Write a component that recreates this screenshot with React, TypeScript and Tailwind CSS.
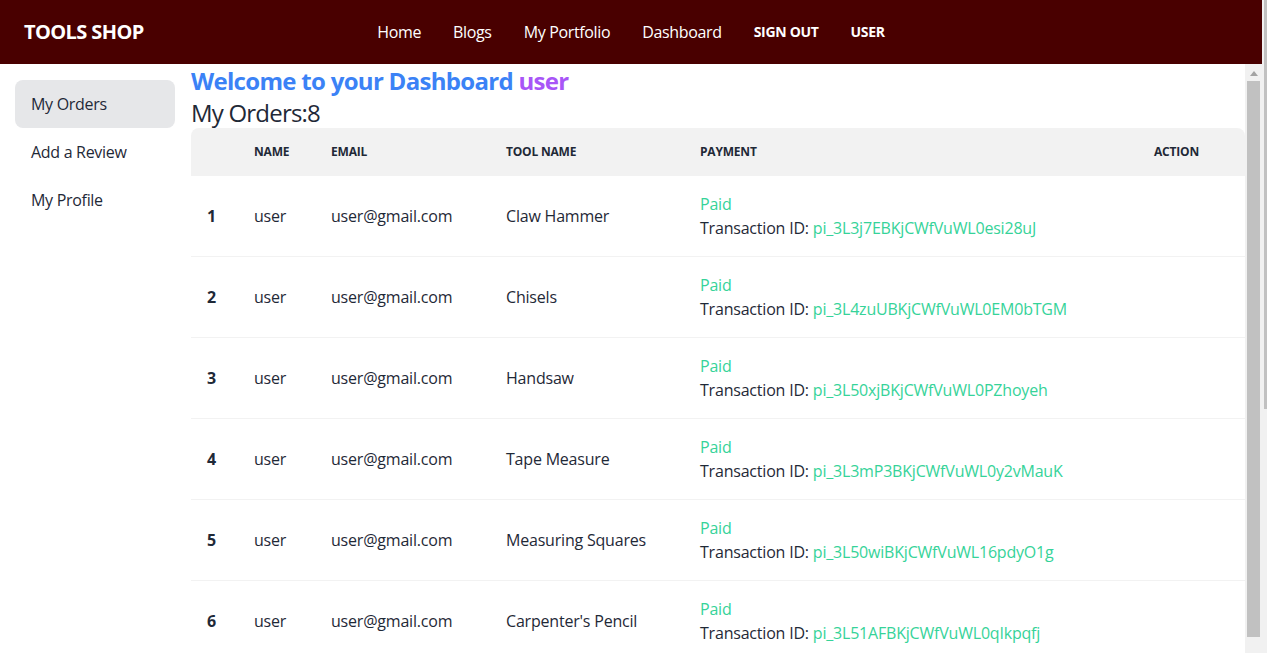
const ORDERS = [
  { name: 'user', email: 'user@gmail.com', tool: 'Claw Hammer', tx: 'pi_3L3j7EBKjCWfVuWL0esi28uJ' },
  { name: 'user', email: 'user@gmail.com', tool: 'Chisels', tx: 'pi_3L4zuUBKjCWfVuWL0EM0bTGM' },
  { name: 'user', email: 'user@gmail.com', tool: 'Handsaw', tx: 'pi_3L50xjBKjCWfVuWL0PZhoyeh' },
  { name: 'user', email: 'user@gmail.com', tool: 'Tape Measure', tx: 'pi_3L3mP3BKjCWfVuWL0y2vMauK' },
  { name: 'user', email: 'user@gmail.com', tool: 'Measuring Squares', tx: 'pi_3L50wiBKjCWfVuWL16pdyO1g' },
  { name: 'user', email: 'user@gmail.com', tool: "Carpenter's Pencil", tx: 'pi_3L51AFBKjCWfVuWL0qIkpqfj' },
];

const NAV_LINKS = ['Home', 'Blogs', 'My Portfolio', 'Dashboard'];

function Navbar() {
  return (
    <nav className="h-16 shrink-0 flex items-center bg-[#490000] text-white">
      <div className="flex-1">
        <span className="ml-6 text-xl font-bold tracking-[-0.6px]">TOOLS SHOP</span>
      </div>
      <ul className="flex items-center gap-8">
        {NAV_LINKS.map((link) => (
          <li key={link} className="text-base tracking-[-0.35px]">{link}</li>
        ))}
        <li className="text-sm font-bold tracking-[-0.3px]">SIGN OUT</li>
        <li className="text-sm font-bold tracking-[-0.3px]">USER</li>
      </ul>
      <div className="flex-1" />
    </nav>
  );
}

function Sidebar() {
  return (
    <aside className="w-[191px] shrink-0 pt-4 pl-[15px] pr-4">
      <ul className="flex flex-col text-[#1f2937] tracking-[-0.3px]">
        <li className="h-12 flex items-center px-4 rounded-lg bg-[#e6e7e9]">My Orders</li>
        <li className="h-12 flex items-center px-4">Add a Review</li>
        <li className="h-12 flex items-center px-4">My Profile</li>
      </ul>
    </aside>
  );
}

function OrdersTable() {
  return (
    <table className="w-[1054px] table-fixed border-collapse text-left text-[#1f2937]">
      <colgroup>
        <col className="w-[47px]" />
        <col className="w-[77px]" />
        <col className="w-[175px]" />
        <col className="w-[194px]" />
        <col className="w-[454px]" />
        <col className="w-[107px]" />
      </colgroup>
      <thead>
        <tr className="text-xs font-bold uppercase leading-4 tracking-[-0.2px]">
          <th className="p-4 bg-[#f2f2f2] rounded-tl-lg"></th>
          <th className="p-4 bg-[#f2f2f2]">Name</th>
          <th className="p-4 bg-[#f2f2f2]">Email</th>
          <th className="p-4 bg-[#f2f2f2]">Tool Name</th>
          <th className="p-4 bg-[#f2f2f2]">Payment</th>
          <th className="p-4 bg-[#f2f2f2] rounded-tr-lg">Action</th>
        </tr>
      </thead>
      <tbody>
        {ORDERS.map((order, i) => (
          <tr key={order.tx} className="border-b border-[#f2f2f2] text-base leading-6 tracking-[-0.2px]">
            <th className="p-4 font-bold">{i + 1}</th>
            <td className="p-4">{order.name}</td>
            <td className="p-4">{order.email}</td>
            <td className="p-4">{order.tool}</td>
            <td className="p-4 whitespace-nowrap">
              <p className="text-[#36d399]">Paid</p>
              <p>
                Transaction ID: <span className="text-[#36d399]">{order.tx}</span>
              </p>
            </td>
            <td className="p-4"></td>
          </tr>
        ))}
      </tbody>
    </table>
  );
}

// fake scrollbar of the drawer content
function ScrollTrack() {
  return (
    <div className="w-[17px] shrink-0 bg-[#f1f1f1] flex flex-col items-center">
      <svg width="8" height="5" viewBox="0 0 8 5" className="mt-[7px]">
        <polygon points="4,0 8,5 0,5" fill="#a3a3a3" />
      </svg>
      <div className="mt-[5px] w-[13px] h-[556px] bg-[#c1c1c1]" />
    </div>
  );
}

export default function App() {
  return (
    <div
      className="flex h-[653px] w-[1267px] overflow-hidden bg-white"
      style={{ fontFamily: '"Open Sans", "Noto Sans", sans-serif' }}
    >
      <div className="flex flex-col w-[1262px]">
        <Navbar />
        <div className="flex flex-1 min-h-0">
          <Sidebar />
          <main className="flex-1 min-w-0 overflow-hidden">
            <h2 className="pt-px text-2xl font-bold leading-8 text-[#3b82f6] tracking-[-0.7px]">
              Welcome to your Dashboard <span className="text-[#a855f7]">user</span>
            </h2>
            <h3 className="-mb-px text-2xl leading-8 text-[#1f2937] tracking-[-0.8px]">My Orders:8</h3>
            <OrdersTable />
          </main>
          <ScrollTrack />
        </div>
      </div>
      <div className="w-[5px] shrink-0 bg-[#f1f1f1] flex justify-end">
        <div className="w-[3px] h-[409px] bg-[#c1c1c1]" />
      </div>
    </div>
  );
}
